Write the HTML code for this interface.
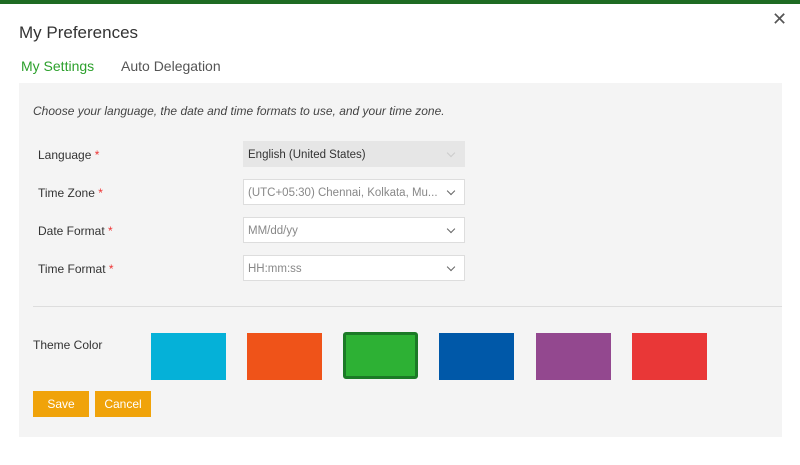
<!DOCTYPE html><html><head><style>
body{margin:0;width:800px;height:465px;background:#fff;font-family:"Liberation Sans",sans-serif;position:relative;overflow:hidden}
.a{position:absolute}
.top{left:0;top:0;width:800px;height:4px;background:#1e6b22}
.panel{left:19px;top:83px;width:763px;height:354px;background:#f4f4f4}
.lbl{font-size:12px;color:#333;left:38px}
.lbl b{color:#e33;font-weight:normal}
.sel{left:243px;border:1px solid #ddd;background:#fff;font-size:11.5px;color:#888;line-height:26px;padding-left:4px;box-sizing:border-box;width:222px;height:26px}
.sel:after{content:"";position:absolute;right:10px;top:8px;width:5px;height:5px;border-right:1px solid #666;border-bottom:1px solid #666;transform:rotate(45deg)}
.sw{top:333px;width:75px;height:47px}
.btn{top:391px;height:26px;background:#f0a30a;color:#fff;font-size:12px;line-height:26px;text-align:center}
</style></head><body>
<div class="a top"></div>
<div class="a" style="left:19px;top:23px;font-size:17px;color:#333">My Preferences</div>
<div class="a" style="left:772px;top:9px;font-size:18px;color:#555">✕</div>
<div class="a" style="left:21px;top:58px;font-size:14px;color:#2ca02c">My Settings</div>
<div class="a" style="left:121px;top:58px;font-size:14px;color:#555">Auto Delegation</div>
<div class="a panel"></div>
<div class="a" style="left:33px;top:104px;font-size:12px;font-style:italic;color:#444">Choose your language, the date and time formats to use, and your time zone.</div>
<div class="a lbl" style="top:148px">Language <b>*</b></div>
<div class="a lbl" style="top:186px">Time Zone <b>*</b></div>
<div class="a lbl" style="top:224px">Date Format <b>*</b></div>
<div class="a lbl" style="top:262px">Time Format <b>*</b></div>
<div class="a sel" style="top:141px;background:#e6e6e6;border-color:#e6e6e6;color:#333" id="l">English (United States)</div>
<div class="a sel" style="top:179px">(UTC+05:30) Chennai, Kolkata, Mu...</div>
<div class="a sel" style="top:217px">MM/dd/yy</div>
<div class="a sel" style="top:255px">HH:mm:ss</div>
<style>#l:after{border-color:#ccc}</style>
<div class="a" style="left:33px;top:306px;width:749px;height:1px;background:#ddd"></div>
<div class="a lbl" style="left:33px;top:338px">Theme Color</div>
<div class="a sw" style="left:151px;background:#05b1d8"></div>
<div class="a sw" style="left:247px;background:#ef5319"></div>
<div class="a sw" style="left:343px;background:#2db134;border:3px solid #1b7a26;border-radius:3px;box-sizing:border-box;top:332px"></div>
<div class="a sw" style="left:439px;background:#0058a8"></div>
<div class="a sw" style="left:536px;background:#93488f"></div>
<div class="a sw" style="left:632px;background:#e93737"></div>
<div class="a btn" style="left:33px;width:56px">Save</div>
<div class="a btn" style="left:95px;width:56px">Cancel</div>
</body></html>
